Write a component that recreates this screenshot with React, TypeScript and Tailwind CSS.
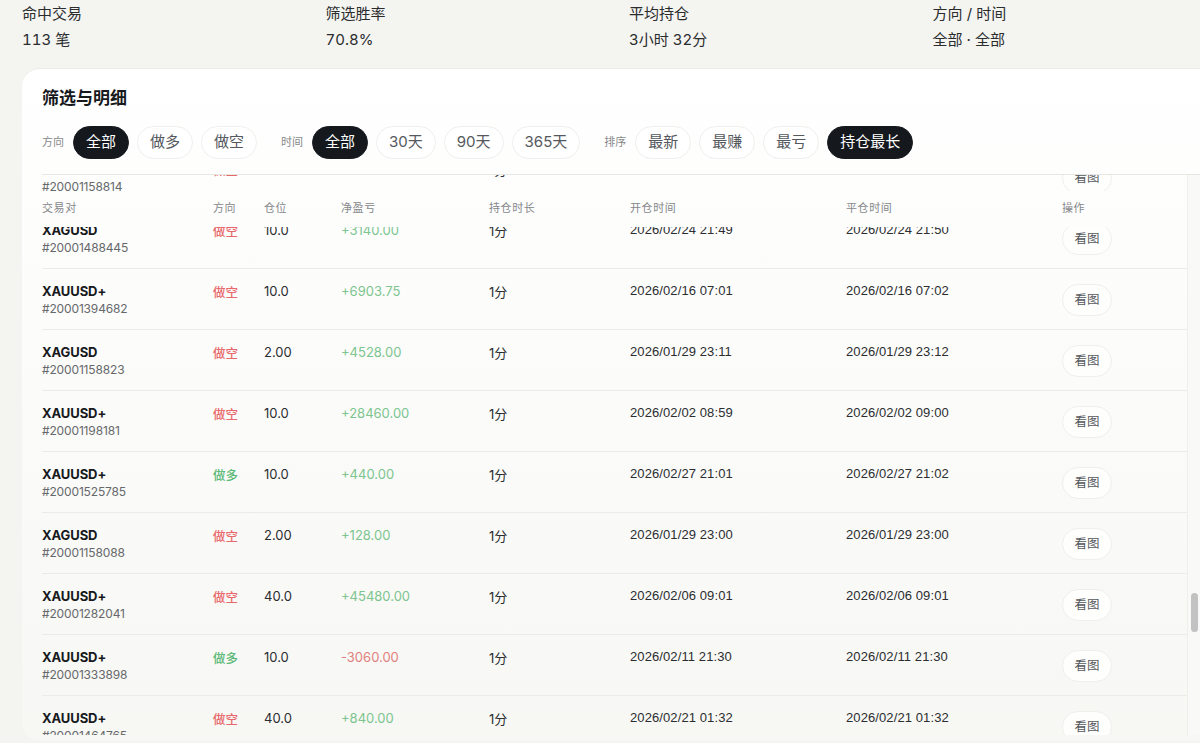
const stats = [
  { label: "命中交易", value: "113 笔" },
  { label: "筛选胜率", value: "70.8%" },
  { label: "平均持仓", value: "3小时 32分" },
  { label: "方向 / 时间", value: "全部 · 全部" },
];

const filters = [
  { label: "方向", options: ["全部", "做多", "做空"], active: "全部" },
  { label: "时间", options: ["全部", "30天", "90天", "365天"], active: "全部" },
  { label: "排序", options: ["最新", "最赚", "最亏", "持仓最长"], active: "持仓最长" },
];

const heads = ["交易对", "方向", "仓位", "净盈亏", "持仓时长", "开仓时间", "平仓时间", "操作"];

type Trade = {
  pair: string;
  id: string;
  side: string;
  size: string;
  pnl: string;
  open: string;
  close: string;
};

const stub: Trade = { pair: "XAGUSD", id: "#20001158814", side: "做空", size: "2.00", pnl: "+2120.00", open: "2026/01/29 23:02", close: "2026/01/29 23:03" };
const partial: Trade = { pair: "XAGUSD", id: "#20001488445", side: "做空", size: "10.0", pnl: "+3140.00", open: "2026/02/24 21:49", close: "2026/02/24 21:50" };

const trades: Trade[] = [
  { pair: "XAUUSD+", id: "#20001394682", side: "做空", size: "10.0", pnl: "+6903.75", open: "2026/02/16 07:01", close: "2026/02/16 07:02" },
  { pair: "XAGUSD", id: "#20001158823", side: "做空", size: "2.00", pnl: "+4528.00", open: "2026/01/29 23:11", close: "2026/01/29 23:12" },
  { pair: "XAUUSD+", id: "#20001198181", side: "做空", size: "10.0", pnl: "+28460.00", open: "2026/02/02 08:59", close: "2026/02/02 09:00" },
  { pair: "XAUUSD+", id: "#20001525785", side: "做多", size: "10.0", pnl: "+440.00", open: "2026/02/27 21:01", close: "2026/02/27 21:02" },
  { pair: "XAGUSD", id: "#20001158088", side: "做空", size: "2.00", pnl: "+128.00", open: "2026/01/29 23:00", close: "2026/01/29 23:00" },
  { pair: "XAUUSD+", id: "#20001282041", side: "做空", size: "40.0", pnl: "+45480.00", open: "2026/02/06 09:01", close: "2026/02/06 09:01" },
  { pair: "XAUUSD+", id: "#20001333898", side: "做多", size: "10.0", pnl: "-3060.00", open: "2026/02/11 21:30", close: "2026/02/11 21:30" },
  { pair: "XAUUSD+", id: "#20001464765", side: "做空", size: "40.0", pnl: "+840.00", open: "2026/02/21 01:32", close: "2026/02/21 01:32" },
];

function Row({ t }: { t: Trade }) {
  return (
    <div className="grid h-[61px] shrink-0 grid-cols-[171px_51px_77px_148px_141px_216px_216px_1fr] border-b border-[#ebebe8] pt-[13px] text-[13px] leading-[18px] text-[#2b2d30]">
      <div>
        <p className="font-bold tracking-[-0.1px] text-[#17191c]">{t.pair}</p>
        <p className="mt-px text-xs leading-4 tracking-[-0.15px] text-[#66686b]">{t.id}</p>
      </div>
      <p className={`mt-0.5 text-[12.5px] font-medium ${t.side === "做多" ? "text-[#5cb978]" : "text-[#e8696b]"}`}>{t.side}</p>
      <p>{t.size}</p>
      <p className={t.pnl.startsWith("-") ? "text-[#e27f7f]" : "text-[#7cc58f]"}>{t.pnl}</p>
      <p className="mt-px">1分</p>
      <p className="font-['Liberation_Sans',sans-serif] tracking-[0.1px]">{t.open}</p>
      <p className="font-['Liberation_Sans',sans-serif] tracking-[0.1px]">{t.close}</p>
      <div>
        <button className="mt-0.5 h-8 w-[50px] rounded-full border border-[#efefec] bg-[#fefefd] text-[12.5px] text-[#55585c]">看图</button>
      </div>
    </div>
  );
}

export default function App() {
  return (
    <div className="flex h-[743px] w-[1200px] flex-col overflow-hidden bg-[#f4f4f1] font-['Inter','Noto_Sans_CJK_SC',sans-serif]">
      <div className="grid h-[68px] w-[1236px] shrink-0 grid-cols-4 pl-[22px] pt-[4px] text-[15px] leading-5 text-[#2a2c2e]">
        {stats.map((s) => (
          <div key={s.label}>
            <p>{s.label}</p>
            <p className="mt-1.5 tabular-nums">{s.value}</p>
          </div>
        ))}
      </div>

      <div className="ml-[22px] flex h-[673px] shrink-0 flex-col overflow-hidden rounded-tl-[18px] rounded-bl-[18px] border-t border-[#ebebe8] bg-gradient-to-b from-white to-[#f7f7f4]">
        <div className="ml-5 h-[106px] shrink-0 border-b border-[#e6e6e3]">
          <h2 className="pt-[17px] text-[17px] font-semibold leading-6 text-[#17191c]">筛选与明细</h2>
          <div className="mt-4 flex gap-6">
            {filters.map((f) => (
              <div key={f.label} className="flex items-center gap-2">
                <span className="mr-px text-[11px] text-[#88898b]">{f.label}</span>
                {f.options.map((o) => (
                  <span
                    key={o}
                    className={`flex h-[33px] items-center rounded-full border px-3 text-[15px] ${
                      o === f.active ? "border-[#15191e] bg-[#15191e] text-white" : "border-[#efefed] bg-white text-[#55585c]"
                    }`}
                  >
                    {o}
                  </span>
                ))}
              </div>
            ))}
          </div>
        </div>

        <div className="flex h-[560px] shrink-0">
          <div className="ml-5 flex w-[1145px] flex-col overflow-hidden">
            <div className="h-4 shrink-0 overflow-hidden">
              <div className="mt-[-28px]">
                <Row t={stub} />
              </div>
            </div>
            <div className="grid h-9 shrink-0 grid-cols-[171px_51px_77px_148px_141px_216px_216px_1fr] pt-[9px] text-[11px] leading-4 tracking-[0.6px] text-[#85878a]">
              {heads.map((h) => (
                <span key={h}>{h}</span>
              ))}
            </div>
            <div className="h-[42px] shrink-0 overflow-hidden">
              <div className="mt-[-19px]">
                <Row t={partial} />
              </div>
            </div>
            {trades.map((t) => (
              <Row key={t.id} t={t} />
            ))}
          </div>
          <div className="ml-auto w-[13px] border-l border-[#efefec] bg-[#f9f9f7] pl-[3px] pt-[418px]">
            <div className="h-[39px] w-[7px] rounded-full bg-[#c2c2c2]" />
          </div>
        </div>
      </div>
    </div>
  );
}
